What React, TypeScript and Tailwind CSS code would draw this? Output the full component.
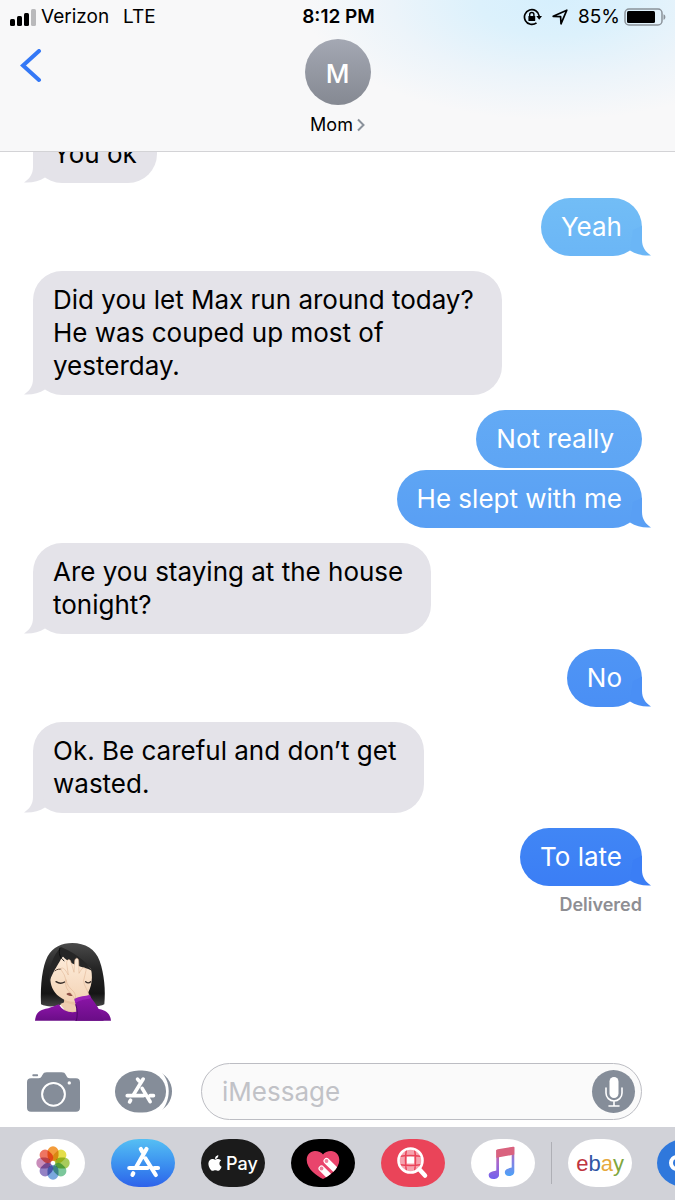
import React, { useState } from 'react';
import { FaApple } from 'react-icons/fa';

type Message = {
  id: number;
  from: 'me' | 'mom';
  text: string;
  color: string;
  padding?: string;
  tail?: string;
  spacing?: string;
};

const gray = 'bg-[#e4e3e9] text-black';
const grayTail = 'text-[#e4e3e9]';

const messages: Message[] = [
  { id: 1, from: 'mom', text: 'You ok', color: gray, tail: grayTail },
  { id: 2, from: 'me', text: 'Yeah', color: 'bg-linear-to-b from-[#72bdf6] to-[#6bb6f6] text-white', tail: 'text-[#6bb6f6]', spacing: 'mt-[15px]' },
  { id: 3, from: 'mom', text: 'Did you let Max run around today?\nHe was couped up most of\nyesterday.', color: gray, padding: 'pr-7', tail: grayTail, spacing: 'mt-[15px]' },
  { id: 4, from: 'me', text: 'Not really', color: 'bg-linear-to-b from-[#63aaf5] to-[#5ea5f4] text-white', padding: 'pr-7', spacing: 'mt-[15px]' },
  { id: 5, from: 'me', text: 'He slept with me', color: 'bg-linear-to-b from-[#5ea5f4] to-[#599ff4] text-white', tail: 'text-[#599ff4]', spacing: 'mt-0.5' },
  { id: 6, from: 'mom', text: 'Are you staying at the house\ntonight?', color: gray, padding: 'pr-7', tail: grayTail, spacing: 'mt-[15px]' },
  { id: 7, from: 'me', text: 'No', color: 'bg-linear-to-b from-[#4f95f5] to-[#4a8ff5] text-white', tail: 'text-[#4a8ff5]', spacing: 'mt-[15px]' },
  { id: 8, from: 'mom', text: 'Ok. Be careful and don’t get\nwasted.', color: gray, padding: 'pr-7', tail: grayTail, spacing: 'mt-[15px]' },
  { id: 9, from: 'me', text: 'To late', color: 'bg-linear-to-b from-[#4186f5] to-[#3b7ef5] text-white', tail: 'text-[#3b7ef5]', spacing: 'mt-[15px]' },
];

function Bubble({ message }: { message: Message }) {
  const mine = message.from === 'me';
  return (
    <li className={`flex ${message.spacing ?? ''} ${mine ? 'justify-end' : 'justify-start'}`}>
      <div className={`relative rounded-[29px] pt-3 pb-[13px] pl-5 ${message.padding ?? 'pr-5'} ${message.color}`}>
        <p className="text-[26px] leading-[33px] whitespace-pre-line">{message.text}</p>
        {message.tail && (
          <svg
            viewBox="0 0 30 30"
            className={`absolute bottom-0 size-[30px] ${message.tail} ${mine ? '-right-[9px]' : '-left-[9px] -scale-x-100'}`}
            aria-hidden="true"
          >
            <path d="M12 4L21 0V14C21 21 24.500 26 30 29.500C22 30 15 28.500 9 24.500Z" fill="currentColor" />
          </svg>
        )}
      </div>
    </li>
  );
}

function StatusBar() {
  return (
    <div className="grid h-[34px] grid-cols-[1fr_auto_1fr] items-center pr-2 pl-2.5 text-[19px] text-black">
      <div className="flex items-center gap-1">
        <svg viewBox="0 0 27 17" className="h-[17px] w-[27px]" aria-hidden="true">
          <rect x="0" y="10" width="5" height="7" rx="1.500" />
          <rect x="7" y="7" width="5" height="10" rx="1.500" />
          <rect x="14" y="4" width="5" height="13" rx="1.500" />
          <rect x="21" y="0" width="5" height="17" rx="1.500" fill="#b9b9bb" />
        </svg>
        <span>Verizon</span>
        <span className="pl-2.5">LTE</span>
      </div>
      <time className="font-semibold">8:12 PM</time>
      <div className="flex items-center justify-end">
        <svg viewBox="0 0 19 18" className="mr-2.5 h-[18px] w-[19px]" fill="none" stroke="#000" strokeWidth="1.700" aria-hidden="true">
          <path d="M13.500 14.800A7.400 7.400 0 1 1 16.200 8" />
          <path d="M13.300 8H19L16.200 11.800Z" fill="#000" stroke="none" />
          <path d="M6.700 8.500V6.600a2.100 2.100 0 0 1 4.200 0V8.500" strokeWidth="1.400" />
          <rect x="5.400" y="8" width="6.800" height="5" rx="0.600" fill="#000" stroke="none" />
        </svg>
        <svg viewBox="0 0 16 16" className="mr-2.5 size-4" fill="none" stroke="#000" strokeWidth="1.700" strokeLinejoin="round" aria-hidden="true">
          <path d="M1.200 7.300L14.800 1.200L9 14.800L8.600 7.600Z" />
        </svg>
        <span>85%</span>
        <svg viewBox="0 0 43 18" className="ml-1 h-[18px] w-[43px]" aria-hidden="true">
          <rect x="1" y="1" width="37" height="16" rx="4" fill="none" stroke="#8b9299" strokeWidth="1.500" />
          <rect x="3" y="3" width="28" height="12" rx="1.500" />
          <path d="M39.500 6.200C42 7 42 11 39.500 11.800Z" fill="#8b9299" />
        </svg>
      </div>
    </div>
  );
}

function Header() {
  return (
    <header className="relative z-10 border-b border-[#d3d3d6] bg-[#f8f8f9] bg-[radial-gradient(ellipse_250px_120px_at_82%_0%,#d6effd_0%,#dcf1fc_30%,#ecf4fa_65%,#f8f8f900_100%)]">
      <StatusBar />
      <div className="grid grid-cols-[1fr_auto_1fr] items-start pb-3.5">
        <button type="button" aria-label="Back" className="mt-[15px] w-fit pl-5">
          <svg viewBox="0 0 22 34" className="h-[34px] w-[22px]" fill="none" stroke="#3478f6" strokeWidth="4" strokeLinecap="round" aria-hidden="true">
            <path d="M19 2L3 16.500L19 31" />
          </svg>
        </button>
        <button type="button" className="flex flex-col items-center pt-[5px]">
          <span className="flex size-[66px] items-center justify-center rounded-full bg-linear-to-b from-[#a4a8b3] to-[#858992] pt-0.5 text-[26px] font-medium text-white">
            M
          </span>
          <span className="mt-2 flex items-center gap-1 text-[18px] leading-6 text-black">
            Mom
            <svg viewBox="0 0 8 14" className="h-3.5 w-2" fill="none" stroke="#8a919b" strokeWidth="2" aria-hidden="true">
              <path d="M1 1.500L6.500 7L1 12.500" />
            </svg>
          </span>
        </button>
      </div>
    </header>
  );
}

function FacepalmEmoji() {
  return (
    <svg viewBox="38 35 240 240" className="size-20" role="img" aria-label="Woman facepalming">
      <defs>
        <linearGradient id="hair" x1="0" y1="0" x2="0" y2="1">
          <stop offset="0" stopColor="#4a4a4a" />
          <stop offset="0.400" stopColor="#262626" />
          <stop offset="0.800" stopColor="#151515" />
          <stop offset="1" stopColor="#444" />
        </linearGradient>
        <linearGradient id="skin" x1="0" y1="0" x2="0" y2="1">
          <stop offset="0" stopColor="#fdebd9" />
          <stop offset="1" stopColor="#f3d3b5" />
        </linearGradient>
        <linearGradient id="sleeve" x1="0" y1="0" x2="0" y2="1">
          <stop offset="0" stopColor="#8c15a8" />
          <stop offset="1" stopColor="#6a0d87" />
        </linearGradient>
      </defs>
      <path d="M62 222C60 160 66 110 82 78C98 50 124 38 156 38C194 38 226 56 238 92C252 132 256 180 252 222C236 230 214 230 196 224H120C100 230 78 230 62 222Z" fill="url(#hair)" />
      <path d="M132 195H188V240C172 254 148 254 130 240Z" fill="#e9c3a2" />
      <path d="M44 271C46 248 58 238 84 234L116 222C126 246 160 252 180 240L236 236C258 240 270 250 272 271Z" fill="url(#sleeve)" />
      <path d="M120 221C130 242 152 247 172 240L170 226L132 216Z" fill="#efcdb0" />
      <path d="M90 148C90 118 108 96 130 78C158 84 196 96 212 116C220 150 210 184 192 204C172 218 144 218 124 204C102 190 92 172 90 148Z" fill="url(#skin)" />
      <path d="M86 158C84 116 96 78 122 50C150 62 196 88 216 122C202 112 178 110 158 100C146 94 134 86 126 76C120 96 98 118 86 158Z" fill="#262626" />
      <path d="M119 52C114 68 118 82 132 92" fill="none" stroke="#0d0d0d" strokeWidth="3" />
      <path d="M103 122C110 116 119 115 127 118" fill="none" stroke="#5b4638" strokeWidth="3" />
      <path d="M107 154Q120 163 133 155" fill="none" stroke="#342a26" strokeWidth="4" strokeLinecap="round" />
      <path d="M196 154Q204 161 211 154" fill="none" stroke="#342a26" strokeWidth="4" strokeLinecap="round" />
      <path d="M138 191C145 185 154 187 161 196C154 198 144 198 138 191Z" fill="#8e5147" />
      <g stroke="#dcb18e" strokeWidth="1.500">
        <path d="M132 134C124 120 119 116 124 113C132 112 138 124 144 134L139 98C139 86 149 84 152 95L161 126L163 92C165 80 175 81 175 93L176 129L184 116C190 108 200 114 196 125L190 150C190 168 204 180 207 198L166 216C162 204 160 190 147 176C136 164 139 150 132 134Z" fill="url(#skin)" />
        <path d="M137 148C140 166 150 174 160 184C165 190 166 200 166 208C158 200 157 193 147 184C136 174 134 160 137 148Z" fill="#f6d8bd" />
      </g>
      <path d="M163 208C176 200 196 200 208 196C220 212 240 236 250 271H164C172 250 168 228 163 208Z" fill="url(#sleeve)" />
      <path d="M162 206C178 196 194 198 209 193L212 204C196 208 180 208 165 219Z" fill="#9b22b8" />
      <path d="M166 222C172 240 172 256 168 271" fill="none" stroke="#4f0868" strokeWidth="3" />
    </svg>
  );
}

function Composer() {
  const [draft, setDraft] = useState('');
  return (
    <form className="flex items-center pr-[33px] pb-[7px] pl-[27px]" onSubmit={(e) => e.preventDefault()}>
      <button type="button" aria-label="Camera" className="mr-[35px]">
        <svg viewBox="22 35 158 118" className="h-10 w-[53px]" aria-hidden="true">
          <path d="M34 53H56C63 53 65 49 68 43C71 37 74 35 81 35H125C132 35 135 37 138 43C141 49 143 53 150 53H168C176 53 180 57 180 65V141C180 149 176 153 168 153H34C26 153 22 149 22 141V65C22 57 26 53 34 53Z" fill="#858d99" />
          <rect x="38" y="41" width="17" height="6" rx="2" fill="#858d99" />
          <circle cx="101" cy="101" r="34" fill="none" stroke="#fff" strokeWidth="6" />
          <circle cx="148" cy="67" r="5" fill="#fff" />
        </svg>
      </button>
      <button type="button" aria-label="Apps" className="mr-[29px]">
        <svg viewBox="285 27 172 129" className="h-[43px] w-[57px]" aria-hidden="true">
          <path d="M409 28C438 38 457 62 457 91C457 121 438 146 409 155Z" fill="#858d99" />
          <path d="M400 20H412C434 38 447 62 447 91C447 121 434 146 412 163H400Z" fill="#fff" />
          <rect x="285" y="28" width="154" height="127" rx="72" ry="63" fill="#858d99" />
          <g stroke="#fff" strokeWidth="11" strokeLinecap="round">
            <path d="M370 54L341 101M353 54L358 60M367 82L391 122M322 104H371M391 104H401M332 118L329 123" fill="none" />
          </g>
        </svg>
      </button>
      <div className="flex h-[57px] min-w-0 flex-1 items-center rounded-full border border-[#bcbdc3] bg-[#fafafa] pr-1.5 pl-5">
        <input
          type="text"
          aria-label="iMessage"
          placeholder="iMessage"
          value={draft}
          onChange={(e) => setDraft(e.target.value)}
          className="min-w-0 flex-1 bg-transparent text-[26px] leading-[33px] outline-none placeholder:text-[#c1c2c7]"
        />
        <button type="button" aria-label="Record audio" className="flex size-[43px] shrink-0 items-center justify-center rounded-full bg-[#858d99]">
          <svg viewBox="0 0 18 30" className="h-[30px] w-[18px]" fill="none" stroke="#fff" strokeWidth="1.600" strokeLinecap="round" aria-hidden="true">
            <rect x="4.500" y="0" width="9" height="21" rx="4.500" fill="#fff" stroke="none" />
            <path d="M1 11V16A8 8 0 0 0 17 16V11M9 24V29M4 29H14" />
          </svg>
        </button>
      </div>
    </form>
  );
}

const petals = [
  { angle: 0, color: '#f39c3c' },
  { angle: 45, color: '#e4de4a' },
  { angle: 90, color: '#a8cb5c' },
  { angle: 135, color: '#7cc79b' },
  { angle: 180, color: '#7aa8de' },
  { angle: 225, color: '#9482c4' },
  { angle: 270, color: '#c98dba' },
  { angle: 315, color: '#ee7562' },
];

function PhotosIcon() {
  return (
    <svg viewBox="0 0 64 48" className="isolate h-12 w-16" aria-hidden="true">
      {petals.map((p) => (
        <rect key={p.angle} x="26.500" y="7.300" width="11" height="14.700" rx="5.500" fill={p.color} transform={`rotate(${p.angle} 32 24)`} className="mix-blend-multiply" />
      ))}
    </svg>
  );
}

function AppStoreIcon() {
  return (
    <svg viewBox="0 0 64 48" className="h-12 w-16" fill="none" stroke="#fff" strokeWidth="4.200" strokeLinecap="round" aria-hidden="true">
      <path d="M35.500 10L25.500 27.500M29.800 10L31.500 13M34.500 19.500L44.800 36M18.300 29H36.500M43.500 29H47M22.300 34.300L21.500 35.800" />
    </svg>
  );
}

function HeartIcon() {
  return (
    <svg viewBox="0 0 64 48" className="h-12 w-16" aria-hidden="true">
      <clipPath id="heart">
        <path d="M32 40C26 37 15.700 30 15.700 21C15.700 15.500 19.500 12 24 12C27.500 12 30.500 13.500 32 15.500C33.500 13.500 36.500 12 40 12C44.500 12 48.300 15.500 48.300 21C48.300 30 38 37 32 40Z" />
      </clipPath>
      <g clipPath="url(#heart)">
        <rect width="64" height="48" fill="#e9446c" />
        <path d="M35.500 22L52 38M30.500 29.500L44 43" stroke="#fff" strokeWidth="6" strokeLinecap="round" />
        <circle cx="35.500" cy="22" r="1.900" fill="#ee7f9b" />
        <circle cx="30.500" cy="29.500" r="1.900" fill="#ee7f9b" />
      </g>
    </svg>
  );
}

function ImageSearchIcon() {
  return (
    <svg viewBox="0 0 64 48" className="h-12 w-16" aria-hidden="true">
      <circle cx="29.500" cy="21.500" r="11.500" fill="#f6a3ae" />
      <rect x="26" y="17.500" width="7" height="7" fill="#fff" />
      <path d="M25.500 10Q23.500 21 25.500 33M33.500 10Q35.500 21 33.500 33M18 17.500Q29 15.500 41 17.500M18 25.500Q29 27.500 41 25.500" fill="none" stroke="#ea4459" strokeWidth="1.500" />
      <circle cx="29.500" cy="21.500" r="12" fill="none" stroke="#fff" strokeWidth="2.600" />
      <path d="M38.500 30.500L44 36.500" stroke="#fff" strokeWidth="4.500" strokeLinecap="round" />
    </svg>
  );
}

function MusicIcon() {
  return (
    <svg viewBox="0 0 64 48" className="h-12 w-16" aria-hidden="true">
      <defs>
        <linearGradient id="stemLeft" x1="0" y1="10" x2="0" y2="40" gradientUnits="userSpaceOnUse">
          <stop offset="0" stopColor="#dc5f80" />
          <stop offset="0.450" stopColor="#a968cc" />
          <stop offset="1" stopColor="#7160ee" />
        </linearGradient>
        <linearGradient id="stemRight" x1="0" y1="8" x2="0" y2="37" gradientUnits="userSpaceOnUse">
          <stop offset="0" stopColor="#dc5f80" />
          <stop offset="0.450" stopColor="#8b7de0" />
          <stop offset="1" stopColor="#4ca2f8" />
        </linearGradient>
      </defs>
      <path d="M25.300 11H28V36C28 38.500 25.500 40 22.500 40C19.500 40 17.700 38.500 17.700 36.300C17.700 33.500 20.500 32.600 25.300 31.500Z" fill="url(#stemLeft)" />
      <path d="M40.700 8H43.300V32.500C43.300 35.500 41 37 38 37C35.500 37 33.800 35.500 33.800 33.300C33.800 30.500 36.500 29.500 40.700 28.500Z" fill="url(#stemRight)" />
      <path d="M25.300 12C25.300 10.900 25.700 10.600 26.800 10.300L42 7.700C43 7.500 43.300 8 43.300 8.700V15.500L25.300 18.800Z" fill="#d9627e" />
    </svg>
  );
}

const appShape = 'flex h-12 w-16 shrink-0 items-center justify-center overflow-hidden rounded-[28px/24px]';

function AppDrawer() {
  return (
    <nav aria-label="iMessage apps" className="flex items-center overflow-hidden bg-[#d1d2d8] pt-3 pb-[13px] pl-[21px]">
      <div className="flex shrink-0 gap-[26px]">
        <button type="button" aria-label="Photos" className={`${appShape} bg-white`}>
          <PhotosIcon />
        </button>
        <button type="button" aria-label="App Store" className={`${appShape} bg-linear-to-b from-[#56bff3] to-[#2f62ea]`}>
          <AppStoreIcon />
        </button>
        <button type="button" className={`${appShape} gap-1 bg-[#1b1b1b] text-[18px] font-medium text-white`}>
          <FaApple className="h-[18px] w-3.5" aria-label="Apple" />
          <span>Pay</span>
        </button>
        <button type="button" aria-label="Digital Touch" className={`${appShape} bg-black`}>
          <HeartIcon />
        </button>
        <button type="button" aria-label="Images" className={`${appShape} bg-[#ea4459]`}>
          <ImageSearchIcon />
        </button>
        <button type="button" aria-label="Music" className={`${appShape} bg-white`}>
          <MusicIcon />
        </button>
      </div>
      <div className="mx-4 h-[42px] w-px shrink-0 bg-[#aeafb5]" />
      <div className="flex shrink-0 gap-[25px]">
        <button type="button" className={`${appShape} bg-white font-['Liberation_Sans',sans-serif] text-[22px]`}>
          <span className="text-[#bf3440]">e</span>
          <span className="text-[#3056a4]">b</span>
          <span className="text-[#e6a93c]">a</span>
          <span className="text-[#80a63c]">y</span>
        </button>
        <button type="button" aria-label="More apps" className={`${appShape} bg-[#2f78dc]`}>
          <svg viewBox="0 0 64 48" className="h-12 w-16" fill="none" stroke="#fff" strokeWidth="4" aria-hidden="true">
            <circle cx="20" cy="24" r="6" />
          </svg>
        </button>
      </div>
    </nav>
  );
}

export default function App() {
  return (
    <div className="flex min-h-screen flex-col bg-white font-['Inter',sans-serif]">
      <Header />
      <main className="flex-1 overflow-hidden px-[33px] pb-10">
        {/* the thread is scrolled, so the first bubble slides under the header */}
        <ul className="-mt-[27px]">
          {messages.map((message) => (
            <Bubble key={message.id} message={message} />
          ))}
        </ul>
        <p className="mt-[7px] text-right text-[18px] leading-6 font-semibold text-[#8e8e93]">Delivered</p>
        <div className="mt-[25px]">
          <FacepalmEmoji />
        </div>
      </main>
      <Composer />
      <AppDrawer />
    </div>
  );
}
